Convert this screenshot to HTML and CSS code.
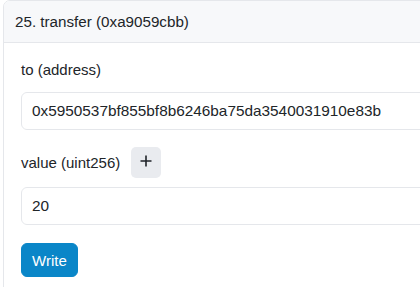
FILE: index.html
```html
<!DOCTYPE html>
<html>
<head>
<meta charset="utf-8">
<link rel="stylesheet" href="styles.css">
</head>
<body>
<div class="card">
  <div class="card-header">25. transfer (0xa9059cbb)</div>
  <div class="card-body">
    <div class="field">
      <div class="label-row"><span class="label">to (address)</span></div>
      <div class="input">0x5950537bf855bf8b6246ba75da3540031910e83b</div>
    </div>
    <div class="field field-value">
      <div class="label-row">
        <span class="label">value (uint256)</span>
        <span class="plus-btn">
          <svg width="12" height="12" viewBox="0 0 12 12"><path d="M6 0.5V11.5M0.5 6H11.5" stroke="#1f2328" stroke-width="1.6" fill="none"/></svg>
        </span>
      </div>
      <div class="input">20</div>
    </div>
    <button class="write-btn">Write</button>
  </div>
</div>
</body>
</html>
```
FILE: styles.css
```css
html, body {
  margin: 0;
  padding: 0;
  overflow: hidden;
  background: #ffffff;
}
body {
  font-family: "Liberation Sans", Arial, sans-serif;
  font-size: 15px;
  color: #212529;
  padding: 0 0 0 3px;
}
.card {
  width: 460px;
  border: 1px solid #e5e7eb;
  border-radius: 7px;
  overflow: hidden;
}
.card-header {
  background: #f7f8fa;
  height: 42px;
  line-height: 41px;
  padding-left: 11px;
  border-bottom: 1px solid #e5e7eb;
  box-sizing: border-box;
  font-size: 15.2px;
}
.card-body {
  padding: 17px 17px 20px 17px;
}
.field {
  display: flex;
  flex-direction: column;
}
.label-row {
  display: flex;
  align-items: center;
  gap: 11px;
  height: 20px;
  margin-bottom: 12px;
}
.label {
  line-height: 20px;
}
.input {
  height: 38px;
  box-sizing: border-box;
  border: 1px solid #e5e7eb;
  border-radius: 6px;
  padding-left: 10px;
  line-height: 36px;
  width: 430px;
  font-size: 15.35px;
}
.field-value {
  margin-top: 17px;
}
.field-value .label-row {
  height: 31px;
  margin-bottom: 9px;
}
.plus-btn {
  width: 30px;
  height: 31px;
  border-radius: 5px;
  background: #e9ebef;
  display: flex;
  align-items: center;
  justify-content: center;
}
.plus-btn svg {
  margin-top: -3px;
}
.write-btn {
  margin-top: 18px;
  font-family: "Liberation Sans", Arial, sans-serif;
  font-size: 15px;
  color: #ffffff;
  background: #0a86c8;
  border: 1px solid #0a86c8;
  border-radius: 6px;
  height: 34px;
  padding: 0 10px;
  display: block;
}
```
